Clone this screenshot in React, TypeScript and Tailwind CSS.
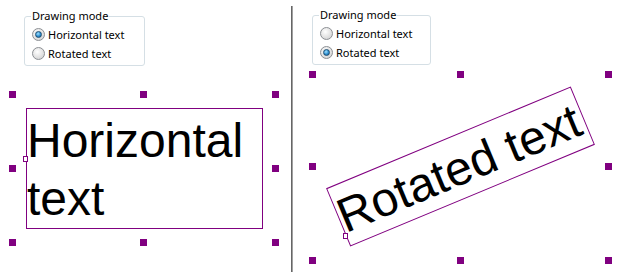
import React from 'react';

type Pt = { x: number; y: number };

const uiFont = { fontFamily: '"Noto Sans", "Open Sans", sans-serif' };
const canvasFont = { fontFamily: '"Liberation Sans", Arial, sans-serif' };

const Radio: React.FC<{ checked: boolean; label: string }> = ({ checked, label }) => (
  <div className="flex items-center h-[19px] gap-[3px]">
    <span className="w-[13px] h-[13px] rounded-full border border-[#8c8f94] bg-[radial-gradient(circle_at_40%_35%,#ffffff,#e2e2e2_55%,#c9cbcd)] flex items-center justify-center shrink-0">
      {checked && (
        <span className="w-[7px] h-[7px] rounded-full border border-[#1f4f72] bg-[radial-gradient(circle_at_40%_35%,#9fe0ff,#2d8fd0_55%,#0f4f86)]" />
      )}
    </span>
    <span className="text-[11px] leading-none text-black">{label}</span>
  </div>
);

const ModeGroup: React.FC<{ rotated: boolean; width: number }> = ({ rotated, width }) => (
  <div
    className="relative h-[50px] border border-[#d5dfe5] rounded-[3px] pt-[8px] pl-[7px]"
    style={{ ...uiFont, width }}
  >
    <span className="absolute -top-[8px] left-[6px] bg-white px-[1px] text-[11px] leading-[14px] text-black">
      Drawing mode
    </span>
    <Radio checked={!rotated} label="Horizontal text" />
    <Radio checked={rotated} label="Rotated text" />
  </div>
);

const Handles: React.FC<{ xs: number[]; ys: number[] }> = ({ xs, ys }) => (
  <>
    {ys.map((y, row) =>
      xs.map((x, col) =>
        row === 1 && col === 1 ? null : (
          <span
            key={`${row}-${col}`}
            className="absolute w-[7px] h-[7px] bg-[#800080]"
            style={{ left: x, top: y }}
          />
        )
      )
    )}
  </>
);

const Anchor: React.FC<{ at: Pt }> = ({ at }) => (
  <span
    className="absolute w-[5px] h-[6px] border border-[#800080] bg-white"
    style={{ left: at.x, top: at.y }}
  />
);

export default function App() {
  return (
    <div className="w-[628px] h-[278px] bg-white flex overflow-hidden">
      <div className="relative w-[291px] h-full pl-[24px] pt-[16px]">
        <ModeGroup rotated={false} width={121} />

        <div
          className="absolute left-[26px] top-[108px] w-[237px] border border-[#800080] pt-[3px] text-[48px] leading-[58px] text-black"
          style={canvasFont}
        >
          Horizontal text
        </div>
        <Anchor at={{ x: 23, y: 156 }} />
        <Handles xs={[9, 140, 272]} ys={[91, 165, 239]} />
      </div>

      <div className="my-[6px] w-[2px] border-l border-l-[#666666] bg-[#a0a0a0]" />

      <div className="relative flex-1 h-full pl-[19px] pt-[15px]">
        <ModeGroup rotated width={119} />

        <div
          className="absolute left-[35px] top-[135px] w-[265px] border border-[#800080] pt-[3px] text-[48px] leading-[58px] text-black whitespace-nowrap rotate-[-22.6deg]"
          style={canvasFont}
        >
          Rotated text
        </div>
        <Anchor at={{ x: 50, y: 233 }} />
        <Handles xs={[16, 164, 312]} ys={[71, 163, 257]} />
      </div>
    </div>
  );
}
